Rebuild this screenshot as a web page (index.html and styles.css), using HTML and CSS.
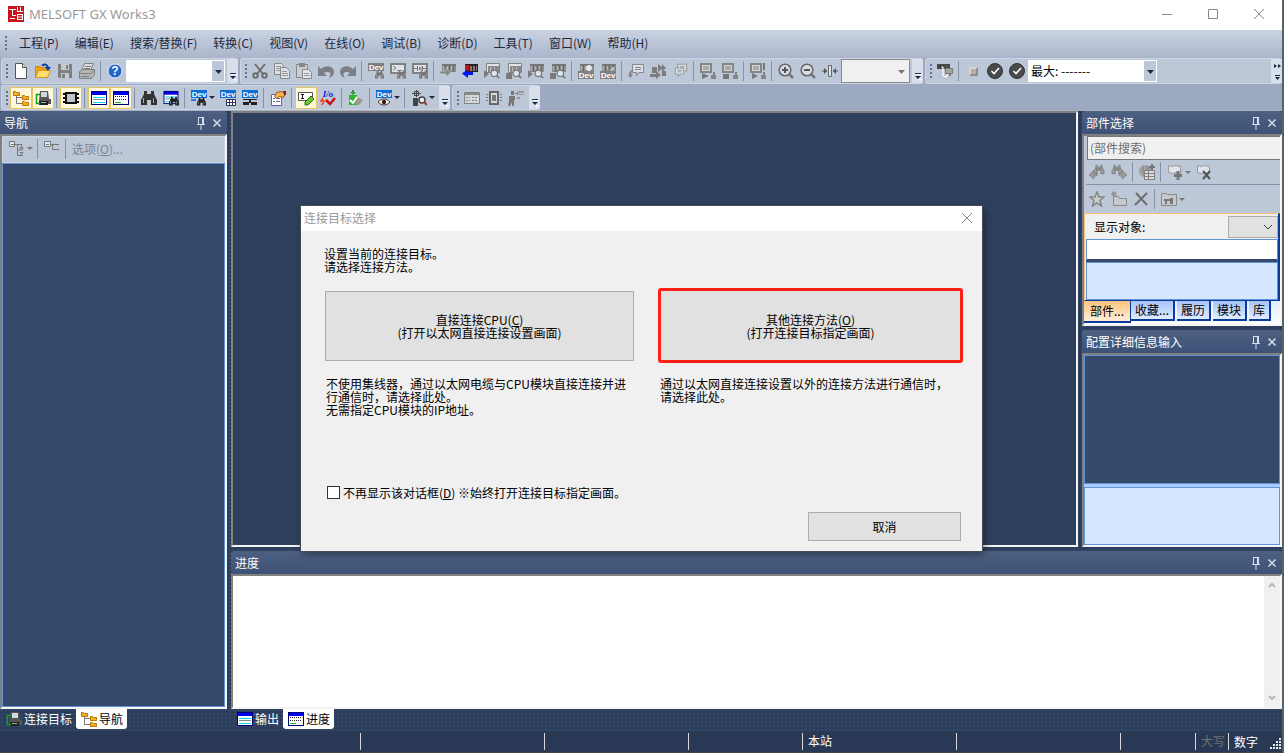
FILE: index.html
```html
<!DOCTYPE html>
<html lang="zh-CN">
<head>
  <meta charset="UTF-8" />
  <meta name="viewport" content="width=device-width, initial-scale=1" />
  <title>MELSOFT GX Works3</title>
  <link rel="stylesheet" href="styles.css">
</head>
<body>
  <!-- Icon sprite -->
  <svg class="sprite" aria-hidden="true">
    <!-- shared parts -->
    <symbol id="p-plc" viewBox="0 0 16 16"><path fill="#777" d="M2 1h14v2H2z"/><path fill="#8d8d8d" d="M2 3h14v6H2z"/><path fill="#666" d="M5 2h1v7H5zM9 2h1v7H9zM13 2h1v7h-1z"/><path fill="#b5b5b5" d="M3 3h1v4H3zM7 3h1v4H7zM11 3h1v4h-1z"/></symbol>
    <symbol id="p-bino" viewBox="0 0 16 16"><path fill="currentColor" d="M3 1h3v3h4V1h3v3l3 6v5h-6v-5H6v5H0v-5l3-6z"/><path fill="#ddd" d="M2 8h1v5H2zM12 8h1v5h-1z" opacity=".7"/></symbol>
    <symbol id="p-mag" viewBox="0 0 16 16"><circle cx="9" cy="9" r="4" fill="#dfe5ee" stroke="#777" stroke-width="1.5"/><path d="M12 12l3 3" stroke="#777" stroke-width="2"/></symbol>
    <symbol id="p-dev" viewBox="0 0 16 8"><path fill="currentColor" d="M0 0h16v8H0z"/><text x="8" y="7" class="dev-text">Dev</text></symbol>
    <symbol id="p-pc" viewBox="0 0 16 16"><path fill="#858585" d="M0 0h12v10H0z"/><path fill="#d5d5d5" d="M2 2h8v6H2z"/><path fill="#aaa" d="M3 3h6v4H3z"/><path fill="#858585" d="M11 12h5v4h-5zM13 9h2v4h-2z"/></symbol>
    <symbol id="p-list" viewBox="0 0 16 16"><path fill="#00007b" d="M0 1h16v14H0z"/><path fill="#0000f0" d="M1 2h14v3H1z"/><path fill="#fff" d="M1 5h14v9H1z"/><path fill="#00d8e8" d="M2 7h12v1H2zM2 12h12v1H2z"/><path fill="#888" d="M2 9h12v1H2z"/></symbol>
    <symbol id="p-dots" viewBox="0 0 16 16"><path fill="#00007b" d="M0 1h16v14H0z"/><path fill="#0000f0" d="M1 2h14v3H1z"/><path fill="#fff" d="M1 5h14v9H1z"/><path stroke="#222" stroke-dasharray="1 1" d="M2 6.500h12M2 9.500h12"/><path fill="#00c800" d="M2 12h6v1H2z"/></symbol>
    <symbol id="p-note" viewBox="0 0 16 16"><path fill="#dde2ea" stroke="#888" d="M4.500 1.500h11v8h-5l-2 3v-3h-4z"/><path stroke="#888" d="M7 4.500h6M7 6.500h6"/></symbol>

    <symbol id="i-new" viewBox="0 0 16 16"><path fill="#fff" stroke="#555" d="M2.500 .5h7l4 4v11h-11z"/><path fill="#ddd" stroke="#555" d="M9.500 .5v4h4"/></symbol>
    <symbol id="i-open" viewBox="0 0 16 16"><path fill="#e9a31c" stroke="#c98a14" d="M.5 3.500h5l1 1h6v10H.5z"/><path fill="#ffdc70" stroke="#d89a15" d="M.5 14.500l3-7h12l-3 7z"/><path d="M7 2.500c3-2 5-1 6 2" fill="none" stroke="#0b3da8" stroke-width="2"/><path fill="#0b3da8" d="M10 4h6l-3 4z"/></symbol>
    <symbol id="i-save" viewBox="0 0 16 16"><path fill="#7f7f7f" d="M1 1h14v14H2l-1-1z"/><path fill="#c5c9d0" d="M4 1h8v6H4zM4 10h8v5H4z"/><path fill="#7f7f7f" d="M9 2h2v4H9zM5 11h3v4H5z"/></symbol>
    <symbol id="i-print" viewBox="0 0 16 16"><path fill="#ddd" stroke="#808080" d="M5.500 .5h9l-3 7h-9z"/><path fill="#b5b5b5" stroke="#808080" d="M.5 8.500l3-2h12v5l-3 4H.5z"/><path fill="none" stroke="#808080" d="M6 3.500h6M5 5.500h6M.5 10.500h12l3-4M2 13.500h8"/></symbol>
    <symbol id="i-help" viewBox="0 0 16 16"><circle cx="8" cy="8" r="7" fill="#2364c8" stroke="#e8eef8" stroke-width="1"/><text x="8" y="12" class="help-text">?</text></symbol>
    <symbol id="i-cut" viewBox="0 0 16 16"><path d="M3 1l8 10M13 1L5 11" stroke="#6f6f6f" stroke-width="2"/><circle cx="3.500" cy="12.500" r="2.200" fill="none" stroke="#6f6f6f" stroke-width="2"/><circle cx="12.500" cy="12.500" r="2.200" fill="none" stroke="#6f6f6f" stroke-width="2"/></symbol>
    <symbol id="i-copy" viewBox="0 0 16 16"><path fill="#dde0e6" stroke="#888" d="M.5 .5h7l2 2v9h-9z"/><path fill="#dde0e6" stroke="#888" d="M6.500 4.500h6l3 3v8h-9z"/><path stroke="#999" d="M2 3.500h5M2 5.500h4M2 7.500h4M8 8.500h5M8 10.500h6M8 12.500h6"/></symbol>
    <symbol id="i-paste" viewBox="0 0 16 16"><path fill="#c9ccd2" stroke="#888" d="M.5 1.500h11v13H.5z"/><path fill="#888" d="M3 0h6v4H3z"/><path fill="#e2e4e8" stroke="#888" d="M6.500 6.500h6l3 3v6h-9z"/><path stroke="#999" d="M8 10.500h5M8 12.500h6"/></symbol>
    <symbol id="i-undo" viewBox="0 0 16 16"><path fill="#7c7f84" d="M0 3l3 3c5-5 13-3 13 3 0 3-2 5-5 6 2-3 2-6-1-6-2 0-3 0-4 1l3 3H0z"/></symbol>
    <symbol id="i-redo" viewBox="0 0 16 16"><path fill="#7c7f84" d="M16 3l-3 3C8 1 0 3 0 9c0 3 2 5 5 6-2-3-2-6 1-6 2 0 3 0 4 1l-3 3h9z"/></symbol>
    <symbol id="i-devfind" viewBox="0 0 16 16"><use href="#p-dev" width="16" height="8" color="#7e7e7e"/><use href="#p-bino" x="7" y="7" width="9" height="9" color="#777"/></symbol>
    <symbol id="i-cmdfind" viewBox="0 0 16 16"><path fill="#dde1e8" stroke="#808080" stroke-width="2" d="M1 1h14v9H1z"/><path d="M3 3l3 2-3 2M7 7.500h5" fill="none" stroke="#808080"/><use href="#p-bino" x="7" y="7" width="9" height="9" color="#777"/></symbol>
    <symbol id="i-contact" viewBox="0 0 16 16"><path fill="#dde1e8" stroke="#808080" stroke-width="2" d="M1 1h14v9H1z"/><path d="M2 5.500h3M5.500 3v5M10.500 3v5M11 5.500h3M7.500 4v3M9 4v3" stroke="#777"/><use href="#p-bino" x="7" y="7" width="9" height="9" color="#777"/></symbol>
    <symbol id="i-write" viewBox="0 0 16 16"><use href="#p-plc" width="16" height="16"/><path fill="#888" stroke="#d8dce4" stroke-width=".5" d="M0 8h6V5l5 4.500L6 14v-3H0z"/></symbol>
    <symbol id="i-read" viewBox="0 0 16 16"><path fill="#222" d="M3 1h13v8H3z"/><path fill="#c01818" d="M3 2h4v6H3z"/><path fill="#8b7272" d="M8 3h2v5H8zM11 3h2v5h-2zM14 3h1v5h-1z"/><path fill="#0018f0" d="M11 9H6V6L0 10.500 6 15v-3h5z"/></symbol>
    <symbol id="i-verify" viewBox="0 0 16 16"><use href="#p-plc" width="16" height="16"/><path fill="#7b7b7b" d="M0 7l5 4-5 4z"/><use href="#p-mag" x="3" y="3" width="13" height="13"/></symbol>
    <symbol id="i-verify-all" viewBox="0 0 16 16"><path fill="#dfe3ea" stroke="#808080" d="M2.500 .5h13v9h-13z"/><path fill="#888" d="M4 3h11v6H4z"/><path fill="#bbb" d="M6 4h1v5H6zM10 4h1v5h-1z"/><path fill="#7b7b7b" d="M0 7l5 4-5 4z"/><use href="#p-mag" x="3" y="3" width="13" height="13"/></symbol>
    <symbol id="i-remote" viewBox="0 0 16 16"><use href="#p-plc" width="16" height="16"/><path fill="#7b7b7b" d="M0 10h6v6H0z"/><use href="#p-mag" x="3" y="3" width="13" height="13"/></symbol>
    <symbol id="i-remote-all" viewBox="0 0 16 16"><path fill="#dfe3ea" stroke="#808080" d="M2.500 .5h13v9h-13z"/><path fill="#888" d="M4 3h11v6H4z"/><path fill="#bbb" d="M6 4h1v5H6zM10 4h1v5h-1z"/><path fill="#7b7b7b" d="M0 10h6v6H0z"/><use href="#p-mag" x="3" y="3" width="13" height="13"/></symbol>
    <symbol id="i-devmon" viewBox="0 0 16 16"><use href="#p-plc" width="16" height="16"/><circle cx="11" cy="5" r="3" fill="#e6eaf0"/><use href="#p-dev" y="8" width="16" height="8" color="#808080"/></symbol>
    <symbol id="i-devedit" viewBox="0 0 16 16"><use href="#p-plc" width="16" height="16"/><path fill="#bbb" stroke="#777" d="M9 7l4-4 3 3-4 3z"/><use href="#p-dev" y="8" width="16" height="8" color="#808080"/></symbol>
    <symbol id="i-note" viewBox="0 0 16 16"><use href="#p-note" width="16" height="16"/><path d="M5 7L2 10v4" fill="none" stroke="#888" stroke-width="2"/><path fill="#888" d="M0 11h5l-2.500 4z"/></symbol>
    <symbol id="i-jump" viewBox="0 0 16 16"><path fill="#7d7d7d" d="M2 4h5v6H2zM8 1l4 3V1l4 4-4 4V6L8 9zM0 11h6V8l5 4-5 4v-2H0zM12 8h4v5h-4z"/></symbol>
    <symbol id="i-notes" viewBox="0 0 16 16"><use href="#p-note" x="1" y="0" width="15" height="13"/><use href="#p-note" y="4" width="12" height="12"/></symbol>
    <symbol id="i-pc1" viewBox="0 0 16 16"><use href="#p-pc" width="16" height="16"/><path fill="#777" d="M2 10l7 3-7 3z"/></symbol>
    <symbol id="i-pc2" viewBox="0 0 16 16"><use href="#p-pc" width="16" height="16"/><path fill="#777" d="M1 11h6v5H1z"/></symbol>
    <symbol id="i-pc3" viewBox="0 0 16 16"><use href="#p-pc" width="16" height="16"/><path fill="#777" d="M2 10l6 3-6 3zM13 0h2v7h-2z"/></symbol>
    <symbol id="i-zoomin" viewBox="0 0 16 16"><circle cx="7" cy="7" r="5.800" fill="#d8dde8" stroke="#686868" stroke-width="1.600"/><path d="M4 7h6M7 4v6" stroke="#555" stroke-width="2"/><path d="M11.500 11.500L15 15" stroke="#777" stroke-width="2.500"/></symbol>
    <symbol id="i-zoomout" viewBox="0 0 16 16"><circle cx="7" cy="7" r="5.800" fill="#d8dde8" stroke="#686868" stroke-width="1.600"/><path d="M4 7h6" stroke="#555" stroke-width="2"/><path d="M11.500 11.500L15 15" stroke="#777" stroke-width="2.500"/></symbol>
    <symbol id="i-fit" viewBox="0 0 16 16"><path fill="#dfe3ea" stroke="#666" d="M6.500 2.500h3v11h-3z"/><path stroke="#555" d="M0 8h5M11 8h5"/><path fill="#555" d="M2 5l3 3-3 3zM14 5l-3 3 3 3z"/></symbol>
    <symbol id="i-conn" viewBox="0 0 16 16"><path fill="#4a4a4a" d="M0 1h13v5H0z"/><path fill="#222" d="M3 2h1v3H3zM6 2h1v3H6z"/><path fill="#a9a49c" stroke="#777" d="M8.500 5.500h7v5h-7z"/><path fill="#888" d="M10 11h4v2h-4z"/><path d="M4 4h2v7c0 4 5 3 5 0" fill="none" stroke="#fff" stroke-width="1.200"/></symbol>
    <symbol id="i-stop" viewBox="0 0 16 16"><path fill="#8d8d8d" d="M4 4h9v9H4z"/><path fill="#d8d4cc" d="M4 4h9L4 13z"/><path fill="#b3b0aa" d="M6 6h5v5H6z"/></symbol>
    <symbol id="i-check" viewBox="0 0 16 16"><circle cx="8" cy="8" r="7.500" fill="#4a4a4a" stroke="#333"/><path d="M4.500 8l2.500 2.500L12 5" fill="none" stroke="#fff" stroke-width="1.600"/></symbol>

    <symbol id="i-tree" viewBox="0 0 16 16"><path d="M3.500 4v9.500H9M3.500 7.500H9" fill="none" stroke="#777"/><path fill="#f5b020" stroke="#b87808" d="M.5 1.500h2l1 1h3v3h-6zM9.500 5.500h2l1 1h3v3h-6zM9.500 11.500h2l1 1h3v3h-6z"/></symbol>
    <symbol id="i-target" viewBox="0 0 16 16"><path fill="#555" d="M5 1h8l1 8h2v5H6v-3H4z"/><path fill="#d0d8dc" d="M6 2h6v5H6z"/><path fill="#222" d="M4 11h9v4H4z"/><path fill="#aaa" d="M6 12h5v1H6z"/><path d="M5 4.500H1.500v9H5" fill="none" stroke="#12a012" stroke-width="1.500"/></symbol>
    <symbol id="i-chip" viewBox="0 0 16 16"><path fill="#111" d="M2 2h12v12H2z"/><path fill="#bfc2c6" d="M4 4h8v8H4z"/><path stroke="#111" stroke-width="2" d="M0 4h3M0 8h3M0 12h3M13 4h3M13 8h3M13 12h3"/></symbol>
    <symbol id="i-bino" viewBox="0 0 16 16"><use href="#p-bino" width="16" height="16" color="#333"/></symbol>
    <symbol id="i-listfind" viewBox="0 0 16 16"><use href="#p-list" width="16" height="15"/><use href="#p-bino" x="6" y="6" width="10" height="10" color="#222"/></symbol>
    <symbol id="i-dev1" viewBox="0 0 16 16"><use href="#p-dev" width="16" height="8" color="#0a6fd6"/><path fill="#3377cc" d="M0 9h5v2H0z"/><use href="#p-bino" x="6" y="7" width="9" height="9" color="#222"/></symbol>
    <symbol id="i-dev2" viewBox="0 0 16 16"><use href="#p-dev" width="16" height="8" color="#0a6fd6"/><path fill="#fff" stroke="#335" d="M6.500 9.500h9v6h-9zM6 12.500h10M9.500 10v6M12.500 10v6"/></symbol>
    <symbol id="i-dev3" viewBox="0 0 16 16"><use href="#p-dev" width="16" height="8" color="#0a6fd6"/><path fill="#222" d="M1 9h14v1H1zM7 10h2v3H7zM1 12h6v3H1zM9 12h6v3H9z"/></symbol>
    <symbol id="i-prop" viewBox="0 0 16 16"><path fill="#fff" stroke="#6060c0" d="M1.500 4.500h10v11h-10z"/><path stroke="#6060c0" d="M3 8.500h2M6 8.500h4M3 11.500h2M6 11.500h4"/><path fill="#f7b54a" stroke="#a0521a" d="M6.500 2.500l5-1 4 2-2 4-4-1-3 2-2-2z"/><path fill="#902020" d="M13 1h3v4h-2z"/></symbol>
    <symbol id="i-edit" viewBox="0 0 16 16"><path fill="#fff" stroke="#555" d="M.5 2.500h14v8H.5z"/><path stroke="#111" d="M3 4.500h3M4.500 4v5M3 8.500h3"/><path fill="#69c432" stroke="#27700c" d="M7 12l6-6 3 3-6 6H7z"/></symbol>
    <symbol id="i-io" viewBox="0 0 16 16"><text x="8" y="7" class="io-text">I/o</text><path d="M3 8L1 11h3l-2 4" fill="none" stroke="#f04010" stroke-width="1.500"/><path d="M6 10l4 4 5-6" fill="none" stroke="#d01010" stroke-width="2.500"/></symbol>
    <symbol id="i-ok" viewBox="0 0 16 16"><path fill="#2db52d" d="M1 5h8v10H1z"/><path fill="#9a9a88" d="M9 7l6 3-4 5-4-1z"/><path d="M2 10l3 3 4-6" fill="none" stroke="#fff" stroke-width="2"/><path fill="#3a9a3a" d="M4 0h2v2h2L5 5 2 2h2z"/></symbol>
    <symbol id="i-deveye" viewBox="0 0 16 16"><use href="#p-dev" width="16" height="8" color="#0a6fd6"/><path fill="#fff" stroke="#4a2a20" d="M2 12c4-4 8-4 12 0-4 4-8 4-12 0z"/><circle cx="8" cy="12" r="2.200" fill="#3a1c14"/></symbol>
    <symbol id="i-inspect" viewBox="0 0 16 16"><path d="M1 3.500h9M5.500 0v7" stroke="#444"/><path fill="none" stroke="#444" d="M3.500 1.500h4v4h-4z"/><path fill="#444" d="M2 8h5v8H2z"/><circle cx="11" cy="10" r="3" fill="#eef" stroke="#444" stroke-width="1.500"/><path d="M13 12l3 3" stroke="#a04020" stroke-width="2"/></symbol>
    <symbol id="i-win" viewBox="0 0 16 16"><path fill="#d4d7dc" stroke="#808080" d="M.5 2.500h15v11H.5z"/><path fill="#888" d="M1 3h14v2H1z"/><path stroke="#888" d="M2 7.500h4M2 10.500h4M8 7.500h6M8 10.500h6" stroke-dasharray="2 1"/></symbol>
    <symbol id="i-unit" viewBox="0 0 16 16"><path fill="#d8dbe0" stroke="#666" stroke-width="2" d="M4 2h8v12H4z"/><path fill="#777" d="M6 5h4v6H6zM0 4h2v1H0zM0 7h2v1H0zM0 10h2v1H0zM14 4h2v1h-2zM14 7h2v1h-2zM14 10h2v1h-2z"/></symbol>
    <symbol id="i-probe" viewBox="0 0 16 16"><path fill="#777" d="M1 6h6v4H6v6H4v-4l-2 4H0l1-5zM3 1h3v4H3zM7 3h3v1H7z"/><path fill="#999" d="M9 1h7v2H9zM9 4h7v1H9zM9 7h3v2H9z"/></symbol>

    <symbol id="i-expand" viewBox="0 0 16 16"><path fill="#e2e6ee" stroke="#777" d="M.5 .5h5v5h-5z"/><path stroke="#777" d="M2 3.500h3M6 3.500h7M8.500 4v10.500H14M8.500 9H14" fill="none"/><path fill="#888" d="M10 8l2.500-4L15 8zM10 11h5l-2.500 3z"/></symbol>
    <symbol id="i-node" viewBox="0 0 16 16"><path fill="#e2e6ee" stroke="#777" d="M.5 .5h6v5h-6z"/><path d="M2 3.500h3M7 3.500h8M8.500 4v4.500H15" fill="none" stroke="#777"/></symbol>
    <symbol id="i-prev" viewBox="0 0 16 16"><use href="#p-bino" x="4" width="12" height="11" color="#888"/><path fill="#999" stroke="#777" stroke-width=".6" d="M8 9H5V6L0 11l5 4v-3h3z"/></symbol>
    <symbol id="i-next" viewBox="0 0 16 16"><use href="#p-bino" width="12" height="11" color="#888"/><path fill="#999" stroke="#777" stroke-width=".6" d="M8 9h3V6l5 5-5 4v-3H8z"/></symbol>
    <symbol id="i-globe" viewBox="0 0 16 16"><circle cx="6" cy="7" r="6" fill="#929292"/><path d="M3 2c-2 3-2 7 1 10M6 1v12" stroke="#bbb" fill="none"/><path fill="#ddd" stroke="#808080" d="M5.500 6.500h10v9h-10zM6 9.500h10M6 12.500h10M9.500 7v8"/><path stroke="#777" stroke-width="2" d="M13 0v6M10 3h6"/></symbol>
    <symbol id="i-bookadd" viewBox="0 0 16 16"><path fill="#e0e3e8" stroke="#999" d="M1.500 1.500l4 1 3-1 5 1v7l-5-1-3 1-4-1z"/><path stroke="#777" stroke-width="3" d="M11 7v9M7 11.500h8"/></symbol>
    <symbol id="i-bookdel" viewBox="0 0 16 16"><path fill="#e0e3e8" stroke="#999" d="M1.500 1.500l4 1 3-1 5 1v7l-5-1-3 1-4-1z"/><path stroke="#555" stroke-width="2" d="M7 7l7 8M14 7l-7 8"/></symbol>
    <symbol id="i-star" viewBox="0 0 16 16"><path fill="#ccc" stroke="#858585" stroke-width="1.500" d="M8 1l2 5h5l-4 3.500L12.500 15 8 12l-4.500 3L5 9.500 1 6h5z"/></symbol>
    <symbol id="i-folder" viewBox="0 0 16 16"><path fill="#c6c8cc" stroke="#888" d="M2.500 5.500h5l1 2h7v7h-13z"/><path stroke="#888" d="M3 0v6M0 3h6M1 1l4 4M5 1L1 5"/></symbol>
    <symbol id="i-del" viewBox="0 0 16 16"><path stroke="#6e6e6e" stroke-width="2" d="M3 2l11 12M14 2L2 14"/></symbol>
    <symbol id="i-chart" viewBox="0 0 16 16"><path fill="#c6c8cc" stroke="#888" d="M.5 2.500h5l1 1h9v11H.5z"/><path fill="#777" d="M3 8h6v2H3zM4 10h2v3H4zM9 7h3v6H9z"/></symbol>
    <symbol id="i-pin" viewBox="0 0 16 16"><path d="M5.500 2v7M10.500 2v7M5 2.500h6M9.500 3v6M4 9.500h8M8 10v5" stroke="currentColor" fill="none"/></symbol>
    <symbol id="i-x" viewBox="0 0 16 16"><path d="M4.500 4.500l7 7M11.500 4.500l-7 7" stroke="currentColor" stroke-width="1.500"/></symbol>
    <symbol id="i-over" viewBox="0 0 10 10"><path fill="#fff" d="M3 3h6v1H3zM5 8h4l-2 2z"/><path fill="#1b2a45" d="M2 2h6v1H2zM2 5h6L5 8z"/></symbol>
  </svg>

  <header class="titlebar">
    <svg class="logo" viewBox="0 0 16 16"><path fill="#c4161c" d="M0 0h16v16H0z"/><path d="M1 3.500h7M4.500 3v7M4 9.500h4M2 12.500h5M9.500 1v5M12.500 1v5M9 5.500h6M9.500 8v6M14.500 8v6M9 8.500h6M9 13.500h6M10 11h4" stroke="#fff" fill="none"/></svg>
    <h1>MELSOFT GX Works3</h1>
    <button class="win-btn" aria-label="最小化"><svg viewBox="0 0 12 12"><path d="M1 6.500h10" stroke="#888"/></svg></button>
    <button class="win-btn" aria-label="最大化"><svg viewBox="0 0 12 12"><path d="M1.500 1.500h9v9h-9z" stroke="#888" fill="none"/></svg></button>
    <button class="win-btn" aria-label="关闭"><svg viewBox="0 0 12 12"><path d="M1 1l10 10M11 1L1 11" stroke="#888"/></svg></button>
  </header>

  <nav class="menubar">
    <span class="grip"></span>
    <button>工程(P)</button>
    <button>编辑(E)</button>
    <button>搜索/替换(F)</button>
    <button>转换(C)</button>
    <button>视图(V)</button>
    <button>在线(O)</button>
    <button>调试(B)</button>
    <button>诊断(D)</button>
    <button>工具(T)</button>
    <button>窗口(W)</button>
    <button>帮助(H)</button>
  </nav>

  <div class="toolbars">
    <div class="toolbar-row">
      <div class="toolbar">
        <span class="grip"></span>
        <button class="tb" aria-label="新建"><svg><use href="#i-new"/></svg></button>
        <button class="tb" aria-label="打开"><svg><use href="#i-open"/></svg></button>
        <button class="tb" aria-label="保存"><svg><use href="#i-save"/></svg></button>
        <button class="tb" aria-label="打印"><svg><use href="#i-print"/></svg></button>
        <span class="sep"></span>
        <button class="tb" aria-label="帮助"><svg><use href="#i-help"/></svg></button>
        <select class="combo combo-find" aria-label="搜索"><option></option></select>
        <button class="over" aria-label="更多"><svg><use href="#i-over"/></svg></button>
      </div>
      <div class="toolbar">
        <span class="grip"></span>
        <button class="tb" aria-label="剪切"><svg><use href="#i-cut"/></svg></button>
        <button class="tb" aria-label="复制"><svg><use href="#i-copy"/></svg></button>
        <button class="tb" aria-label="粘贴"><svg><use href="#i-paste"/></svg></button>
        <button class="tb" aria-label="撤消"><svg><use href="#i-undo"/></svg></button>
        <button class="tb" aria-label="恢复"><svg><use href="#i-redo"/></svg></button>
        <span class="sep"></span>
        <button class="tb" aria-label="软元件搜索"><svg><use href="#i-devfind"/></svg></button>
        <button class="tb" aria-label="指令搜索"><svg><use href="#i-cmdfind"/></svg></button>
        <button class="tb" aria-label="触点搜索"><svg><use href="#i-contact"/></svg></button>
        <span class="sep"></span>
        <button class="tb" aria-label="写入"><svg><use href="#i-write"/></svg></button>
        <button class="tb" aria-label="读取"><svg><use href="#i-read"/></svg></button>
        <button class="tb" aria-label="监视开始(全)"><svg><use href="#i-verify-all"/></svg></button>
        <button class="tb" aria-label="监视停止(全)"><svg><use href="#i-remote-all"/></svg></button>
        <button class="tb" aria-label="监视开始"><svg><use href="#i-verify"/></svg></button>
        <button class="tb" aria-label="监视停止"><svg><use href="#i-remote"/></svg></button>
        <span class="sep"></span>
        <button class="tb" aria-label="软元件监视"><svg><use href="#i-devmon"/></svg></button>
        <button class="tb" aria-label="当前值更改"><svg><use href="#i-devedit"/></svg></button>
        <span class="sep"></span>
        <button class="tb" aria-label="注释"><svg><use href="#i-note"/></svg></button>
        <button class="tb" aria-label="转换"><svg><use href="#i-jump"/></svg></button>
        <button class="tb" aria-label="声明"><svg><use href="#i-notes"/></svg></button>
        <span class="sep"></span>
        <button class="tb" aria-label="模拟开始"><svg><use href="#i-pc1"/></svg></button>
        <button class="tb" aria-label="模拟停止"><svg><use href="#i-pc2"/></svg></button>
        <span class="sep"></span>
        <button class="tb" aria-label="系统模拟"><svg><use href="#i-pc3"/></svg></button>
        <span class="sep"></span>
        <button class="tb" aria-label="放大"><svg><use href="#i-zoomin"/></svg></button>
        <button class="tb" aria-label="缩小"><svg><use href="#i-zoomout"/></svg></button>
        <button class="tb" aria-label="适合宽度"><svg><use href="#i-fit"/></svg></button>
        <select class="combo combo-zoom" aria-label="缩放" disabled><option></option></select>
        <button class="over" aria-label="更多"><svg><use href="#i-over"/></svg></button>
      </div>
      <div class="toolbar toolbar-last">
        <span class="grip"></span>
        <button class="tb" aria-label="连接"><svg><use href="#i-conn"/></svg></button>
        <span class="sep"></span>
        <button class="tb" aria-label="停止"><svg><use href="#i-stop"/></svg></button>
        <button class="tb" aria-label="确认"><svg><use href="#i-check"/></svg></button>
        <button class="tb" aria-label="全部确认"><svg><use href="#i-check"/></svg></button>
        <select class="combo combo-max" aria-label="最大"><option>最大: -------</option></select>
        <button class="over over-end" aria-label="更多"><svg viewBox="0 0 10 20"><path fill="#1b2a45" d="M2 3l3 2-3 2zM6 3l3 2-3 2zM3 14h5v1H3zM3 16h5l-2.500 3z"/></svg></button>
      </div>
    </div>

    <div class="toolbar-row">
      <div class="toolbar">
        <span class="grip"></span>
        <button class="tb on" aria-label="导航"><svg><use href="#i-tree"/></svg></button>
        <button class="tb on" aria-label="连接目标"><svg><use href="#i-target"/></svg></button>
        <span class="sep"></span>
        <button class="tb on" aria-label="部件选择"><svg><use href="#i-chip"/></svg></button>
        <span class="sep"></span>
        <button class="tb on" aria-label="输出"><svg><use href="#p-list"/></svg></button>
        <button class="tb on" aria-label="进度"><svg><use href="#p-dots"/></svg></button>
        <span class="sep"></span>
        <button class="tb" aria-label="查找"><svg><use href="#i-bino"/></svg></button>
        <button class="tb" aria-label="查找结果"><svg><use href="#i-listfind"/></svg></button>
        <span class="sep"></span>
        <button class="tb drop" aria-label="交叉参照"><svg><use href="#i-dev1"/></svg></button>
        <button class="tb" aria-label="软元件使用列表"><svg><use href="#i-dev2"/></svg></button>
        <button class="tb" aria-label="软元件分配"><svg><use href="#i-dev3"/></svg></button>
        <span class="sep"></span>
        <button class="tb" aria-label="属性"><svg><use href="#i-prop"/></svg></button>
        <span class="sep"></span>
        <button class="tb on" aria-label="配置详细信息"><svg><use href="#i-edit"/></svg></button>
        <button class="tb" aria-label="I/O检查"><svg><use href="#i-io"/></svg></button>
        <span class="sep"></span>
        <button class="tb" aria-label="校验"><svg><use href="#i-ok"/></svg></button>
        <span class="sep"></span>
        <button class="tb drop" aria-label="监看"><svg><use href="#i-deveye"/></svg></button>
        <span class="sep"></span>
        <button class="tb drop" aria-label="智能功能模块监视"><svg><use href="#i-inspect"/></svg></button>
        <button class="over" aria-label="更多"><svg><use href="#i-over"/></svg></button>
      </div>
      <div class="toolbar">
        <span class="grip"></span>
        <button class="tb" aria-label="窗口"><svg><use href="#i-win"/></svg></button>
        <button class="tb" aria-label="模块"><svg><use href="#i-unit"/></svg></button>
        <button class="tb" aria-label="诊断"><svg><use href="#i-probe"/></svg></button>
        <button class="over" aria-label="更多"><svg><use href="#i-over"/></svg></button>
      </div>
    </div>
  </div>

  <main class="workspace">
    <div class="left">
      <section class="pane nav-pane">
        <header class="pane-head"><h2>导航</h2><button aria-label="固定"><svg><use href="#i-pin"/></svg></button><button aria-label="关闭"><svg><use href="#i-x"/></svg></button></header>
        <div class="pane-body">
          <div class="nav-tools">
            <button class="tb drop" aria-label="展开"><svg><use href="#i-expand"/></svg></button>
            <span class="sep"></span>
            <button class="tb" aria-label="节点"><svg><use href="#i-node"/></svg></button>
            <span class="sep"></span>
            <button class="nav-option">选项(<u>O</u>)...</button>
          </div>
          <div class="tree"></div>
        </div>
      </section>
      <div class="dock-tabs">
        <button><svg><use href="#i-target"/></svg>连接目标</button>
        <button class="active"><svg><use href="#i-tree"/></svg>导航</button>
      </div>
    </div>

    <div class="right">
      <div class="upper">
        <div class="canvas"></div>
        <aside class="side">
          <section class="pane">
            <header class="pane-head"><h2>部件选择</h2><button aria-label="固定"><svg><use href="#i-pin"/></svg></button><button aria-label="关闭"><svg><use href="#i-x"/></svg></button></header>
            <div class="pane-body parts">
              <input class="parts-search" type="text" placeholder="(部件搜索)" aria-label="部件搜索" />
              <div class="parts-tools">
                <button class="tb" aria-label="上一个"><svg><use href="#i-prev"/></svg></button>
                <button class="tb" aria-label="下一个"><svg><use href="#i-next"/></svg></button>
                <span class="sep"></span>
                <button class="tb" aria-label="登录"><svg><use href="#i-globe"/></svg></button>
                <span class="sep"></span>
                <button class="tb drop" aria-label="添加"><svg><use href="#i-bookadd"/></svg></button>
                <button class="tb" aria-label="移除"><svg><use href="#i-bookdel"/></svg></button>
              </div>
              <div class="parts-tools">
                <button class="tb" aria-label="收藏"><svg><use href="#i-star"/></svg></button>
                <button class="tb" aria-label="新建文件夹"><svg><use href="#i-folder"/></svg></button>
                <button class="tb" aria-label="删除"><svg><use href="#i-del"/></svg></button>
                <span class="sep"></span>
                <button class="tb drop" aria-label="显示方式"><svg><use href="#i-chart"/></svg></button>
              </div>
              <div class="parts-view">
                <div class="parts-filter">
                  <label for="target">显示对象:</label>
                  <select id="target"><option></option></select>
                </div>
                <div class="parts-list"></div>
                <div class="parts-info"></div>
              </div>
              <div class="parts-tabs">
                <button class="active">部件...</button>
                <button>收藏...</button>
                <button>履历</button>
                <button>模块</button>
                <button>库</button>
              </div>
            </div>
          </section>
          <section class="pane config">
            <header class="pane-head"><h2>配置详细信息输入</h2><button aria-label="固定"><svg><use href="#i-pin"/></svg></button><button aria-label="关闭"><svg><use href="#i-x"/></svg></button></header>
            <div class="pane-body config-body">
              <div class="config-grid"></div>
              <div class="config-info"></div>
            </div>
          </section>
        </aside>
      </div>

      <section class="pane progress">
        <header class="pane-head"><h2>进度</h2><button aria-label="固定"><svg><use href="#i-pin"/></svg></button><button aria-label="关闭"><svg><use href="#i-x"/></svg></button></header>
        <div class="pane-body progress-body">
          <div class="scrollbar">
            <svg viewBox="0 0 8 6"><path d="M1 5l3-3 3 3" fill="none" stroke="#b8b8b8" stroke-width="2"/></svg>
            <svg viewBox="0 0 8 6"><path d="M1 1l3 3 3-3" fill="none" stroke="#b8b8b8" stroke-width="2"/></svg>
          </div>
        </div>
      </section>
      <div class="dock-tabs">
        <button><svg><use href="#p-list"/></svg>输出</button>
        <button class="active"><svg><use href="#p-dots"/></svg>进度</button>
      </div>
    </div>
  </main>

  <footer class="statusbar">
    <span class="cell-fill"></span>
    <span class="cell-xl"></span>
    <span class="cell-m"></span>
    <span class="cell-s"></span>
    <span class="cell-l">本站</span>
    <span class="cell-l"></span>
    <span class="cell-xs"></span>
    <span class="cell-key off">大写</span>
    <span class="cell-end">数字
      <svg viewBox="0 0 12 12"><path fill="#e8e8e8" d="M9 0h2v2H9zM6 3h2v2H6zM9 3h2v2H9zM3 6h2v2H3zM6 6h2v2H6zM9 6h2v2H9zM0 9h2v2H0zM3 9h2v2H3zM6 9h2v2H6zM9 9h2v2H9z"/></svg>
    </span>
  </footer>

  <div class="overlay">
    <div class="dialog" role="dialog" aria-labelledby="dialog-title">
      <header class="dialog-head">
        <h2 id="dialog-title">连接目标选择</h2>
        <button aria-label="关闭"><svg viewBox="0 0 12 12"><path d="M1 1l10 10M11 1L1 11" stroke="#888"/></svg></button>
      </header>
      <div class="dialog-body">
        <p>设置当前的连接目标。<br>请选择连接方法。</p>
        <div class="choices">
          <button class="choice">直接连接CPU(<u>C</u>)<br>(打开以太网直接连接设置画面)</button>
          <button class="choice marked">其他连接方法(<u>O</u>)<br>(打开连接目标指定画面)</button>
          <p class="note">不使用集线器，通过以太网电缆与CPU模块直接连接并进<br>行通信时，请选择此处。<br>无需指定CPU模块的IP地址。</p>
          <p class="note">通过以太网直接连接设置以外的连接方法进行通信时，<br>请选择此处。</p>
        </div>
        <label class="skip"><input type="checkbox" />不再显示该对话框(<u>D</u>) ※始终打开连接目标指定画面。</label>
        <button class="cancel">取消</button>
      </div>
    </div>
  </div>
</body>
</html>
```
FILE: styles.css
```css
* {
  box-sizing: border-box;
}
body {
  margin: 0;
  height: 100vh;
  display: flex;
  flex-direction: column;
  overflow: hidden;
  border-right: 2px solid #566466;
  background-color: #2c3d5b;
  background-image: radial-gradient(#35496a 1px, transparent 1px);
  background-size: 4px 4px;
  font-family: "Noto Sans CJK SC", "Noto Sans", sans-serif;
  font-size: 12px;
  line-height: 16px;
  color: #000;
}
button, select, input {
  font: inherit;
  color: inherit;
  margin: 0;
  border-radius: 0;
}
button {
  border: none;
  background: none;
  padding: 0;
}
h1, h2, p {
  margin: 0;
  font-size: inherit;
  font-weight: normal;
}
svg {
  display: block;
  flex: none;
}
.sprite {
  display: none;
}
.dev-text {
  font: bold 8px "Liberation Sans", sans-serif;
  fill: #fff;
  text-anchor: middle;
}
.help-text {
  font: bold 12px "Liberation Sans", sans-serif;
  fill: #fff;
  text-anchor: middle;
}
.io-text {
  font: italic bold 9px "Liberation Serif", serif;
  fill: #1010d0;
  text-anchor: middle;
}

/* Title bar and menu */
.titlebar {
  display: flex;
  align-items: center;
  height: 30px;
  flex: none;
  padding: 0 0 2px 8px;
  background: #fff;
}
.logo {
  width: 16px;
  height: 16px;
}
.titlebar h1 {
  flex: 1;
  margin-left: 5px;
  font-family: "Noto Sans", sans-serif;
  font-size: 13px;
  color: #999;
}
.win-btn {
  width: 46px;
  height: 28px;
  display: flex;
  align-items: center;
  justify-content: center;
}
.win-btn svg, .dialog-head svg {
  width: 12px;
  height: 12px;
}
.menubar {
  display: flex;
  align-items: center;
  flex: none;
  height: 28px;
  padding-bottom: 2px;
  background: linear-gradient(#cad3e2, #aab5cb);
  color: #1b293e;
}
.menubar button {
  padding: 0 8px;
}
.menubar .grip {
  margin: 0 4px 0 5px;
}
.grip {
  width: 2px;
  height: 14px;
  margin: 0 2px 0 4px;
  background: repeating-linear-gradient(#5f7290 0 2px, transparent 2px 4px);
}

/* Toolbars */
.toolbars {
  flex: none;
  background: #9ca9c1;
  border-bottom: 1px solid #a7b2bf;
}
.toolbar-row {
  display: flex;
  gap: 1px;
  height: 26px;
}
.toolbar-row + .toolbar-row {
  margin-top: 1px;
  height: 25px;
}
.toolbar {
  display: flex;
  align-items: center;
  margin-left: 1px;
  border: 1px solid #ccd5e3;
  border-right: none;
  border-radius: 3px;
  background: #bcc7d8;
}
.toolbar-last {
  flex: 1;
}
.tb {
  width: 22px;
  height: 22px;
  display: flex;
  flex: none;
  align-items: center;
  justify-content: center;
  border: 1px solid transparent;
}
.tb svg, .dock-tabs svg, .pane-head svg {
  width: 16px;
  height: 16px;
}
.tb.on {
  background: #fff8dc;
  border-color: #e5c365;
}
.drop {
  width: 29px;
}
.drop::after {
  content: "";
  margin-left: 2px;
  border: 3px solid transparent;
  border-top-color: #1b2a45;
  border-bottom: none;
}
.sep {
  width: 1px;
  height: 20px;
  flex: none;
  margin: 0 3px 0 2px;
  background: #8591a5;
}
.over {
  width: 11px;
  align-self: stretch;
  display: flex;
  align-items: flex-end;
  justify-content: center;
  padding-bottom: 2px;
  margin-left: 2px;
  background: #d8dfea;
}
.over svg {
  width: 10px;
  height: 10px;
}
.over-end {
  margin-left: auto;
}
.over-end svg {
  height: 20px;
}
.combo {
  height: 22px;
  padding: 0 4px;
  appearance: none;
  border: 1px solid #fff;
  background: #fff url("data:image/svg+xml,%3Csvg xmlns='http://www.w3.org/2000/svg' width='12' height='20'%3E%3Cpath fill='%23bcc7d8' d='M0 0h12v20H0z'/%3E%3Cpath fill='%231b2a45' d='M3 9h7l-3.500 4z'/%3E%3C/svg%3E") no-repeat right center;
}
.combo-find {
  width: 99px;
}
.combo-zoom {
  width: 69px;
  height: 24px;
  border-color: #8b8b8b;
  opacity: 1;
  background: #f0f0f0 url("data:image/svg+xml,%3Csvg xmlns='http://www.w3.org/2000/svg' width='12' height='20'%3E%3Cpath fill='%23777' d='M1 9h7l-3.500 4z'/%3E%3C/svg%3E") no-repeat right center;
}
.combo-max {
  width: 129px;
  padding: 0 2px;
}

/* Docked panes */
.workspace {
  flex: 1;
  display: flex;
  gap: 4px;
  min-height: 0;
}
.left {
  width: 227px;
  flex: none;
  display: flex;
  flex-direction: column;
}
.right {
  flex: 1;
  min-width: 0;
  display: flex;
  flex-direction: column;
}
.upper {
  flex: 1;
  min-height: 0;
  display: flex;
  gap: 4px;
}
.canvas {
  flex: 1;
  background: #2f405f;
  border: 2px solid #808080;
  border-right-color: #f4f4f4;
  border-bottom-color: #f4f4f4;
}
.side {
  width: 200px;
  flex: none;
  display: flex;
  flex-direction: column;
  gap: 4px;
}
.pane {
  display: flex;
  flex-direction: column;
  min-height: 0;
}
.pane-head {
  display: flex;
  align-items: center;
  height: 23px;
  flex: none;
  padding: 0 2px 0 4px;
  border-radius: 3px 3px 0 0;
  background: linear-gradient(#4d6082, #3d5277);
  color: #fff;
}
.pane-head h2 {
  flex: 1;
}
.pane-head button {
  color: #d5dcea;
}
.pane-body {
  flex: 1;
  min-height: 0;
  display: flex;
  flex-direction: column;
  border: 2px solid #808080;
  border-right-color: #f4f4f4;
  border-bottom-color: #f4f4f4;
}
.nav-pane {
  flex: 1;
}
.nav-pane .pane-body {
  background: #bcc7d8;
}
.nav-tools {
  height: 27px;
  display: flex;
  align-items: center;
  padding: 0 0 2px 3px;
  border: 1px solid #ccd5e3;
  border-radius: 3px;
  background: #bcc7d8;
}
.nav-tools .drop::after, .parts-tools .drop::after {
  border-top-color: #777;
}
.nav-option {
  margin-left: 3px;
  color: #7d8490;
}
.tree {
  flex: 1;
  border: 1px solid #6193d5;
  background: #35496a;
}

/* Parts selection */
.parts {
  background: #bcc7d8;
}
.parts-search {
  height: 24px;
  margin-left: 3px;
  padding: 0 2px 2px;
  border: 1px solid #777;
  border-right: none;
  background: #f0f0f0;
}
.parts-search::placeholder {
  color: #6d6d6d;
  opacity: 1;
}
.parts-tools {
  display: flex;
  align-items: center;
  height: 24px;
  margin-left: 2px;
}
.parts-tools + .parts-tools {
  height: 29px;
  border-top: 1px solid #8591a5;
}
.parts-view {
  border: 1px solid #f5c07a;
  border-right: 2px solid #0a3a9c;
  border-bottom-color: #0a3a9c;
  background: #f0f0f0;
}
.parts-filter {
  display: flex;
  align-items: center;
  justify-content: space-between;
  height: 25px;
  padding-left: 9px;
}
.parts-filter select {
  width: 50px;
  height: 22px;
  appearance: none;
  border: 1px solid #adadad;
  background: #e1e1e1 url("data:image/svg+xml,%3Csvg xmlns='http://www.w3.org/2000/svg' width='14' height='10'%3E%3Cpath fill='none' stroke='%23444' d='M1 3l4 4 4-4'/%3E%3C/svg%3E") no-repeat right center;
}
.parts-list {
  height: 23px;
  margin-left: 1px;
  border: 1px solid #6193d5;
  border-bottom: 3px solid #35496a;
  background: #fff;
}
.parts-info {
  height: 38px;
  margin-left: 1px;
  border: 1px solid #6193d5;
  background: #d5e6ff;
}
.parts-tabs {
  display: flex;
  align-items: flex-start;
  gap: 2px;
  height: 23px;
  background: linear-gradient(#e0ecff, #fff);
}
.parts-tabs button {
  height: 20px;
  padding: 0 4px;
  border-right: 2px solid #0a3a9c;
  border-bottom: 2px solid #0a3a9c;
  background: linear-gradient(#a5c4f8, #e0ecff);
}
.parts-tabs .active {
  height: 22px;
  padding: 0 6px;
  margin-right: -2px;
  border-right-width: 1px;
  background: linear-gradient(#ffc47c, #ffeedb);
}
.config {
  flex: 1;
}
.config-grid {
  flex: 1;
  border: 1px solid #6193d5;
  background: #35496a;
}
.config-info {
  height: 58px;
  margin-top: 3px;
  border: 1px solid #6193d5;
  background: #d5e6ff;
}
.config-body {
  background: #a8ccff;
}

/* Progress */
.progress {
  height: 158px;
  flex: none;
  margin-top: 4px;
}
.progress-body {
  flex-direction: row;
  justify-content: flex-end;
  background: #fff;
}
.scrollbar {
  width: 16px;
  display: flex;
  flex-direction: column;
  align-items: center;
  justify-content: space-between;
  padding: 6px 0;
  background: #f0f0f0;
}
.scrollbar svg {
  width: 8px;
  height: 6px;
}
.dock-tabs {
  display: flex;
  flex: none;
  height: 22px;
  padding-left: 1px;
  color: #fff;
}
.dock-tabs button {
  display: flex;
  align-items: center;
  gap: 2px;
  height: 20px;
  padding: 0 4px 0 5px;
}
.dock-tabs .active {
  background: #fff;
  color: #000;
  border-radius: 0 0 3px 3px;
}

/* Status bar */
.statusbar {
  display: flex;
  flex: none;
  height: 22px;
  padding: 2px 0;
  background: #293955;
  border-bottom: 1px solid #454545;
  color: #fff;
}
.statusbar span {
  flex: none;
  border-left: 1px solid #d8d8d8;
  padding-left: 5px;
}
.statusbar .cell-fill {
  flex: 1;
  border: none;
}
.cell-xl { width: 184px; }
.cell-m { width: 144px; }
.cell-s { width: 114px; }
.cell-l { width: 154px; }
.cell-l + .cell-l { width: 164px; }
.cell-xs { width: 75px; }
.cell-key { width: 33px; }
.cell-end {
  width: 54px;
  display: flex;
  align-items: flex-end;
  justify-content: space-between;
}
.cell-end svg {
  width: 12px;
  height: 12px;
}
.off {
  color: #6f6f6f;
}

/* Connection dialog */
.overlay {
  position: absolute;
  inset: 4px 1px 0 0;
  display: grid;
  place-items: center;
}
.dialog {
  width: 681px;
  background: #f0f0f0;
  box-shadow: 0 0 1px 1px #444c5a, 2px 3px 9px rgba(0, 0, 0, 0.45);
}
.dialog-head {
  display: flex;
  align-items: center;
  height: 25px;
  padding: 0 9px 2px 3px;
  background: #fff;
  color: #999;
}
.dialog-head h2 {
  flex: 1;
}
.dialog-body {
  display: flex;
  flex-direction: column;
  align-items: flex-start;
  padding: 16px 19px 10px 23px;
  line-height: 13px;
}
.choices {
  width: 100%;
  display: grid;
  grid-template-columns: 310px 1fr;
  align-items: center;
  column-gap: 24px;
  margin-top: 15px;
}
.choice {
  height: 70px;
  margin-left: 1px;
  border: 1px solid #adadad;
  background: #e1e1e1;
}
.marked {
  height: 75px;
  margin-left: 0;
  border: 3px solid #ff2015;
  border-radius: 3px;
}
.note {
  align-self: start;
  margin-top: 14px;
  padding-left: 2px;
  white-space: nowrap;
}
.skip {
  display: flex;
  align-items: center;
  margin: 70px 0 0 3px;
  white-space: pre;
}
.skip input {
  appearance: none;
  width: 13px;
  height: 13px;
  margin-right: 3px;
  border: 1px solid #333;
  background: #fff;
}
.cancel {
  align-self: flex-end;
  width: 153px;
  height: 29px;
  margin: 13px 2px 0 0;
  border: 1px solid #adadad;
  background: #e1e1e1;
}
```
